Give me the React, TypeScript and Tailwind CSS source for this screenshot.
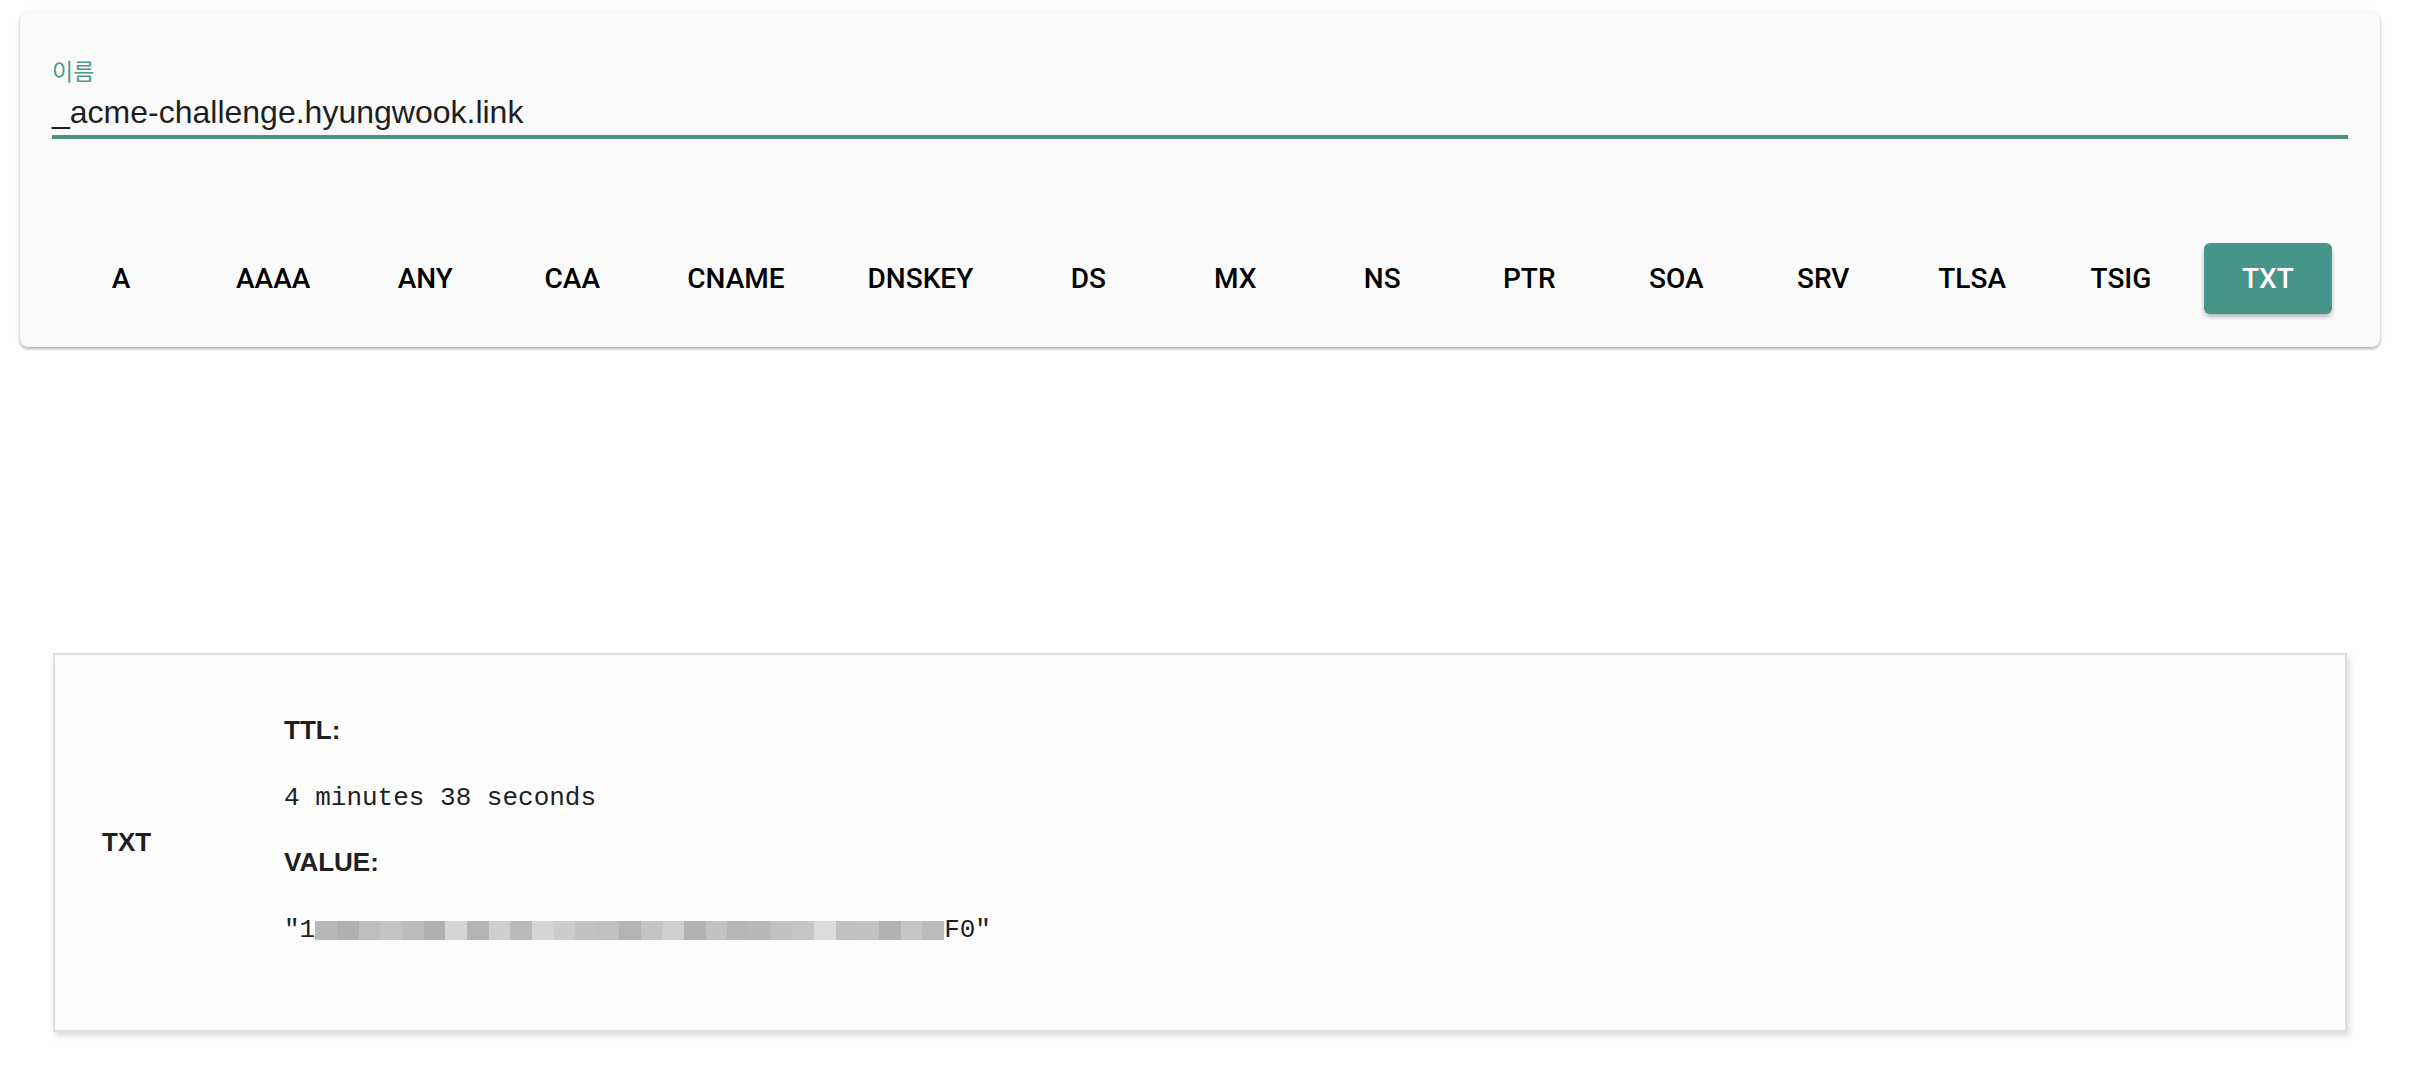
import React from "react";

const types = ["A", "AAAA", "ANY", "CAA", "CNAME", "DNSKEY", "DS", "MX", "NS", "PTR", "SOA", "SRV", "TLSA", "TSIG", "TXT"];

const mosaic = [
  "#b8b8b8", "#b0b0b0", "#bebebe", "#c4c4c4", "#bcbcbc", "#b0b0b0", "#d4d4d4", "#b4b4b4",
  "#cecece", "#bababa", "#d6d6d6", "#cccccc", "#c2c2c2", "#c0c0c0", "#b4b4b4", "#c4c4c4",
  "#cfcfcf", "#b2b2b2", "#c2c2c2", "#b6b6b6", "#b8b8b8", "#c2c2c2", "#c6c6c6", "#dcdcdc",
  "#c0c0c0", "#c2c2c2", "#b2b2b2", "#c6c6c6", "#bcbcbc",
];

export default function App() {
  return (
    <div className="min-h-[1070px] w-[2410px] bg-white" style={{ fontFamily: '"Liberation Sans", Arial, sans-serif' }}>
      <div className="pt-[12px] pl-[20px] pr-[30px]">
        {/* Top card */}
        <div className="rounded-[8px] bg-[#fafafa] shadow-[0_2px_3px_rgba(0,0,0,0.28),0_0_6px_rgba(0,0,0,0.07)] px-[32px] pt-[48px] pb-[33px]">
          <div
            className="text-[23px] leading-[24px] text-[#4a9a8e]"
            style={{ fontFamily: '"Liberation Sans", "Noto Sans CJK KR", sans-serif' }}
          >
            이름
          </div>
          <div className="mt-[9px] border-b-[4px] border-[#4b9385] pb-[4px]">
            <div className="text-[32px] leading-[38px] text-[#1f1f1f]">_acme-challenge.hyungwook.link</div>
          </div>
          <div className="mt-[104px] ml-[5px] mr-[16px] flex items-center justify-between">
            {types.map((t) =>
              t === "TXT" ? (
                <div
                  key={t}
                  className="flex h-[71px] min-w-[128px] items-center justify-center rounded-[6px] bg-[#45958a] px-[32px] text-[28px] font-medium text-white shadow-[0_3px_4px_rgba(0,0,0,0.25)]"
                  style={{ fontFamily: "Roboto, sans-serif" }}
                >
                  {t}
                </div>
              ) : (
                <div
                  key={t}
                  className="flex h-[71px] min-w-[128px] items-center justify-center px-[32px] text-[28px] font-medium text-black"
                  style={{ fontFamily: "Roboto, sans-serif" }}
                >
                  {t}
                </div>
              )
            )}
          </div>
        </div>

        {/* Record card */}
        <div className="mt-[306px] ml-[33px] mr-[33px] flex border-[2px] border-[#dedede] bg-[#fdfdfd] shadow-[2px_4px_6px_rgba(0,0,0,0.14)]">
          <div className="flex w-[229px] items-center pl-[47px] text-[26px] font-bold text-[#1f1f1f]">TXT</div>
          <div className="pt-[60px] pb-[85px] text-[#1f1f1f]">
            <div className="text-[26px] font-bold leading-[30px]">TTL:</div>
            <div className="mt-[38px] text-[26px] leading-[30px]" style={{ fontFamily: '"Liberation Mono", "Courier New", monospace' }}>
              4 minutes 38 seconds
            </div>
            <div className="mt-[34px] text-[26px] font-bold leading-[30px]">VALUE:</div>
            <div
              className="mt-[38px] flex items-center text-[26px] leading-[30px]"
              style={{ fontFamily: '"Liberation Mono", "Courier New", monospace' }}
            >
              <span>"1</span>
              <span className="flex h-[19px]">
                {mosaic.map((c, i) => (
                  <span key={i} className="h-full w-[21.7px]" style={{ backgroundColor: c }} />
                ))}
              </span>
              <span>F0"</span>
            </div>
          </div>
        </div>
      </div>
    </div>
  );
}
